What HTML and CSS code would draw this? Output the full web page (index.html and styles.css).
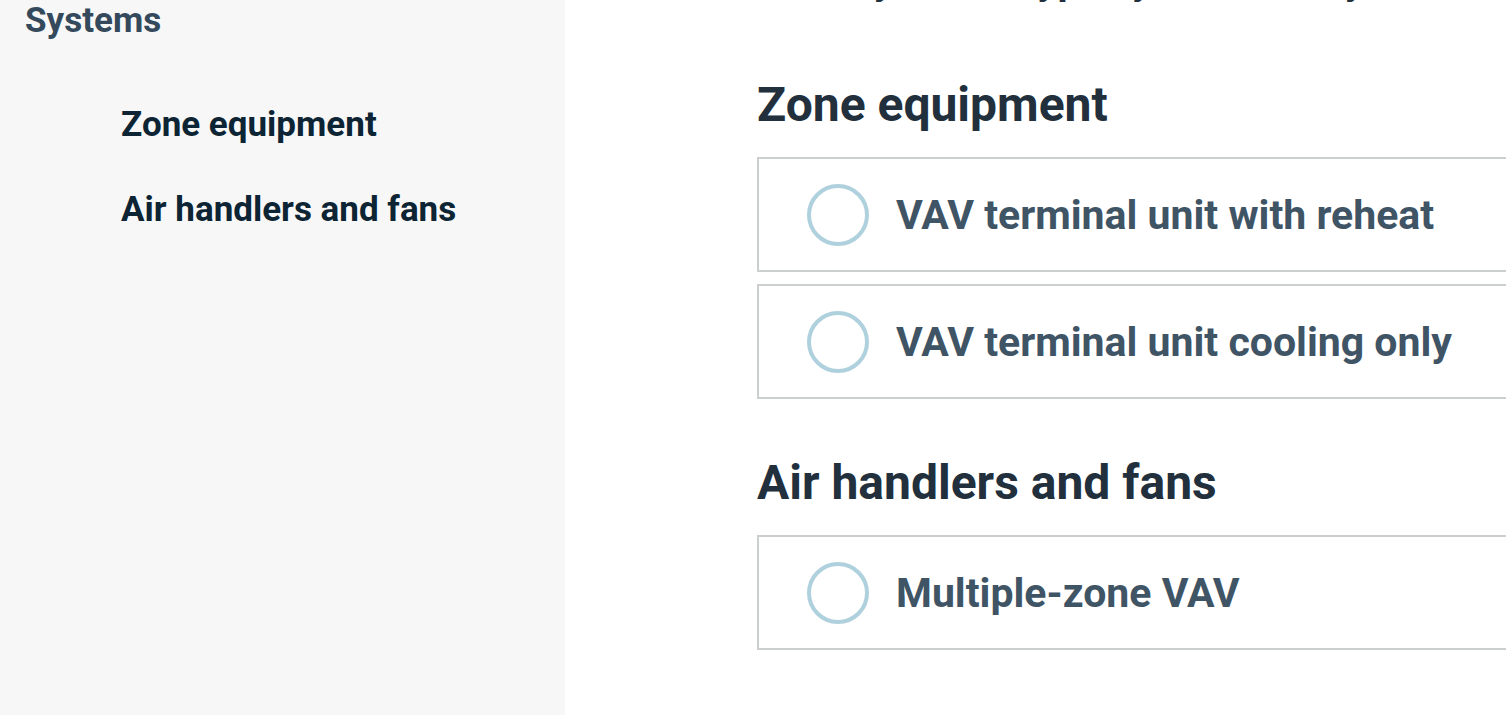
FILE: index.html
```html
<!DOCTYPE html>
<html>
<head>
<meta charset="utf-8">
<link rel="stylesheet" href="styles.css">
</head>
<body>
<div class="page">
  <aside class="sidebar">
    <div class="side-title">Systems</div>
    <nav class="side-nav">
      <a class="side-link">Zone equipment</a>
      <a class="side-link">Air handlers and fans</a>
    </nav>
  </aside>
  <main class="main">
    <p class="intro">Identify all the types you have in your building</p>
    <section class="group">
      <h2 class="group-title">Zone equipment</h2>
      <label class="option"><span class="radio"></span><span class="option-label">VAV terminal unit with reheat</span></label>
      <label class="option"><span class="radio"></span><span class="option-label">VAV terminal unit cooling only</span></label>
    </section>
    <section class="group">
      <h2 class="group-title">Air handlers and fans</h2>
      <label class="option"><span class="radio"></span><span class="option-label">Multiple-zone VAV</span></label>
    </section>
  </main>
</div>
</body>
</html>
```
FILE: styles.css
```css
html, body {
  margin: 0;
  padding: 0;
  height: 100%;
  background: #ffffff;
  font-family: Roboto, "Noto Sans", sans-serif;
  overflow: hidden;
}
.page {
  display: flex;
  height: 715px;
}
.sidebar {
  width: 565px;
  flex: none;
  background: #f7f7f7;
  padding: 0 0 0 25px;
  box-sizing: border-box;
}
.side-title {
  font-size: 35px;
  font-weight: 700;
  color: #34495b;
  line-height: 42px;
}
.side-nav {
  display: flex;
  flex-direction: column;
  gap: 41px;
  padding-left: 96px;
  margin-top: 61px;
}
.side-link {
  font-size: 35px;
  font-weight: 700;
  color: #0c2433;
  line-height: 44px;
}
.main {
  flex: 1;
  padding-left: 192px;
  min-width: 0;
  overflow: hidden;
}
.intro {
  margin: -41px 0 0 0;
  font-size: 40px;
  line-height: 44px;
  font-weight: 700;
  color: #22303d;
  white-space: nowrap;
}
.group {
  display: flex;
  flex-direction: column;
  gap: 12px;
}
.group + .group {
  margin-top: 56px;
}
.group-title {
  margin: 74px 0 12px 0;
  font-size: 48px;
  font-weight: 700;
  line-height: 56px;
  color: #22303d;
}
.group + .group .group-title {
  margin-top: 0;
}
.option {
  display: flex;
  align-items: center;
  gap: 27px;
  height: 115px;
  box-sizing: border-box;
  border: 2px solid #cccfcf;
  border-right: none;
  padding-left: 48px;
}
.radio {
  width: 62px;
  height: 62px;
  box-sizing: border-box;
  border: 4px solid #afd0dd;
  border-radius: 50%;
  flex: none;
}
.option-label {
  font-size: 41px;
  font-weight: 700;
  color: #3f5465;
  white-space: nowrap;
}
```
